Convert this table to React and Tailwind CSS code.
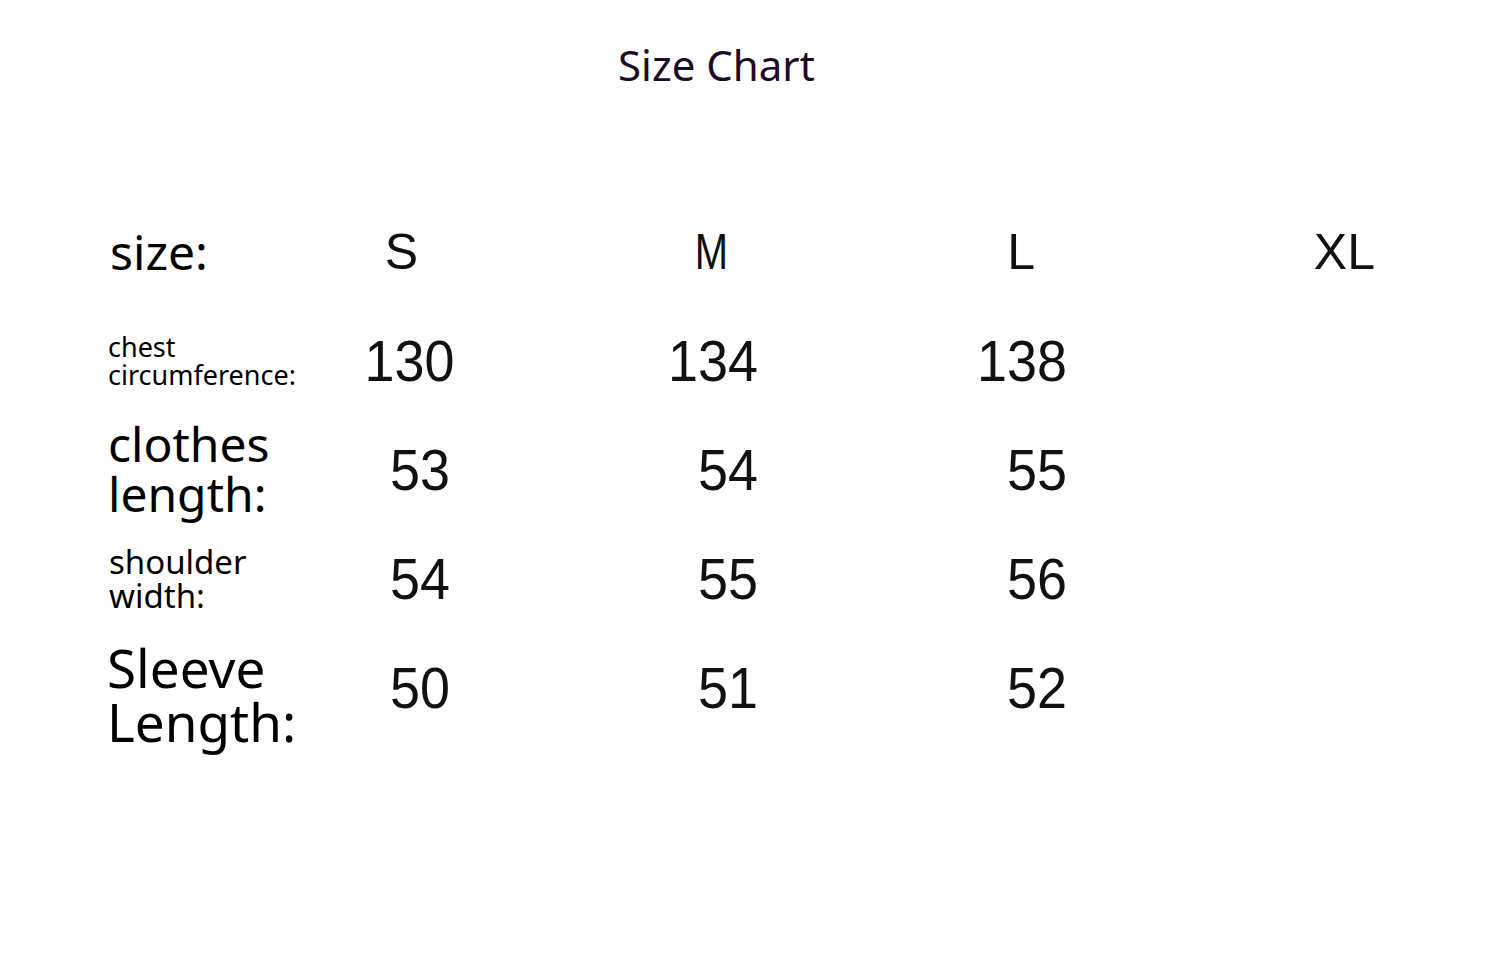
const sizes = [
  { s: 'S', cls: 'pr-[32px]' },
  { s: 'M', cls: 'pr-[30px] scale-x-[0.8] origin-[calc(100%-30px)_50%]' },
  { s: 'L', cls: 'pr-[32px]' },
  { s: 'XL', cls: '' },
];

const rows = [
  { label: ['chest', 'circumference:'], cls: 'text-[27px] leading-[28px]', values: ['130', '134', '138', ''] },
  { label: ['clothes', 'length:'], cls: 'text-[48px] leading-[50px] -mt-[2px]', values: ['53', '54', '55', ''] },
  { label: ['shoulder', 'width:'], cls: 'text-[33px] leading-[34px] pl-px', values: ['54', '55', '56', ''] },
  { label: ['Sleeve', 'Length:'], cls: 'text-[53px] leading-[54px] -ml-px mt-[14px]', values: ['50', '51', '52', ''] },
];

export default function App() {
  return (
    <div className="min-h-screen w-full bg-white text-black">
      <div className="pt-[44px] pl-[618px]">
        <h1 className="text-[42px] leading-[42px] text-[#1e0b26] font-['Noto_Sans',sans-serif]">Size Chart</h1>
      </div>

      <div className="mt-[111px] pl-[108px] grid grid-cols-[250px_92px_308px_309px_308px] auto-rows-[109px] items-center">
        {/* header row */}
        <div className="font-['Noto_Sans',sans-serif] text-[48px] leading-none pl-[2px]">size:</div>
        {sizes.map((h) => (
          <div
            key={h.s}
            className={`text-right font-['Liberation_Sans',Arial,sans-serif] text-[50px] leading-none text-[#111] ${h.cls}`}
          >
            {h.s}
          </div>
        ))}

        {rows.map((row) => (
          <Row key={row.label[0]} row={row} />
        ))}
      </div>
    </div>
  );
}

function Row({ row }) {
  return (
    <>
      <div className={`font-['Noto_Sans',sans-serif] ${row.cls}`}>
        {row.label[0]}
        <br />
        {row.label[1]}
      </div>
      {row.values.map((v, i) => (
        <div
          key={i}
          className="text-right origin-right scale-x-[0.93] font-['Liberation_Sans',Arial,sans-serif] text-[58px] leading-none text-[#111]"
        >
          {v}
        </div>
      ))}
    </>
  );
}
